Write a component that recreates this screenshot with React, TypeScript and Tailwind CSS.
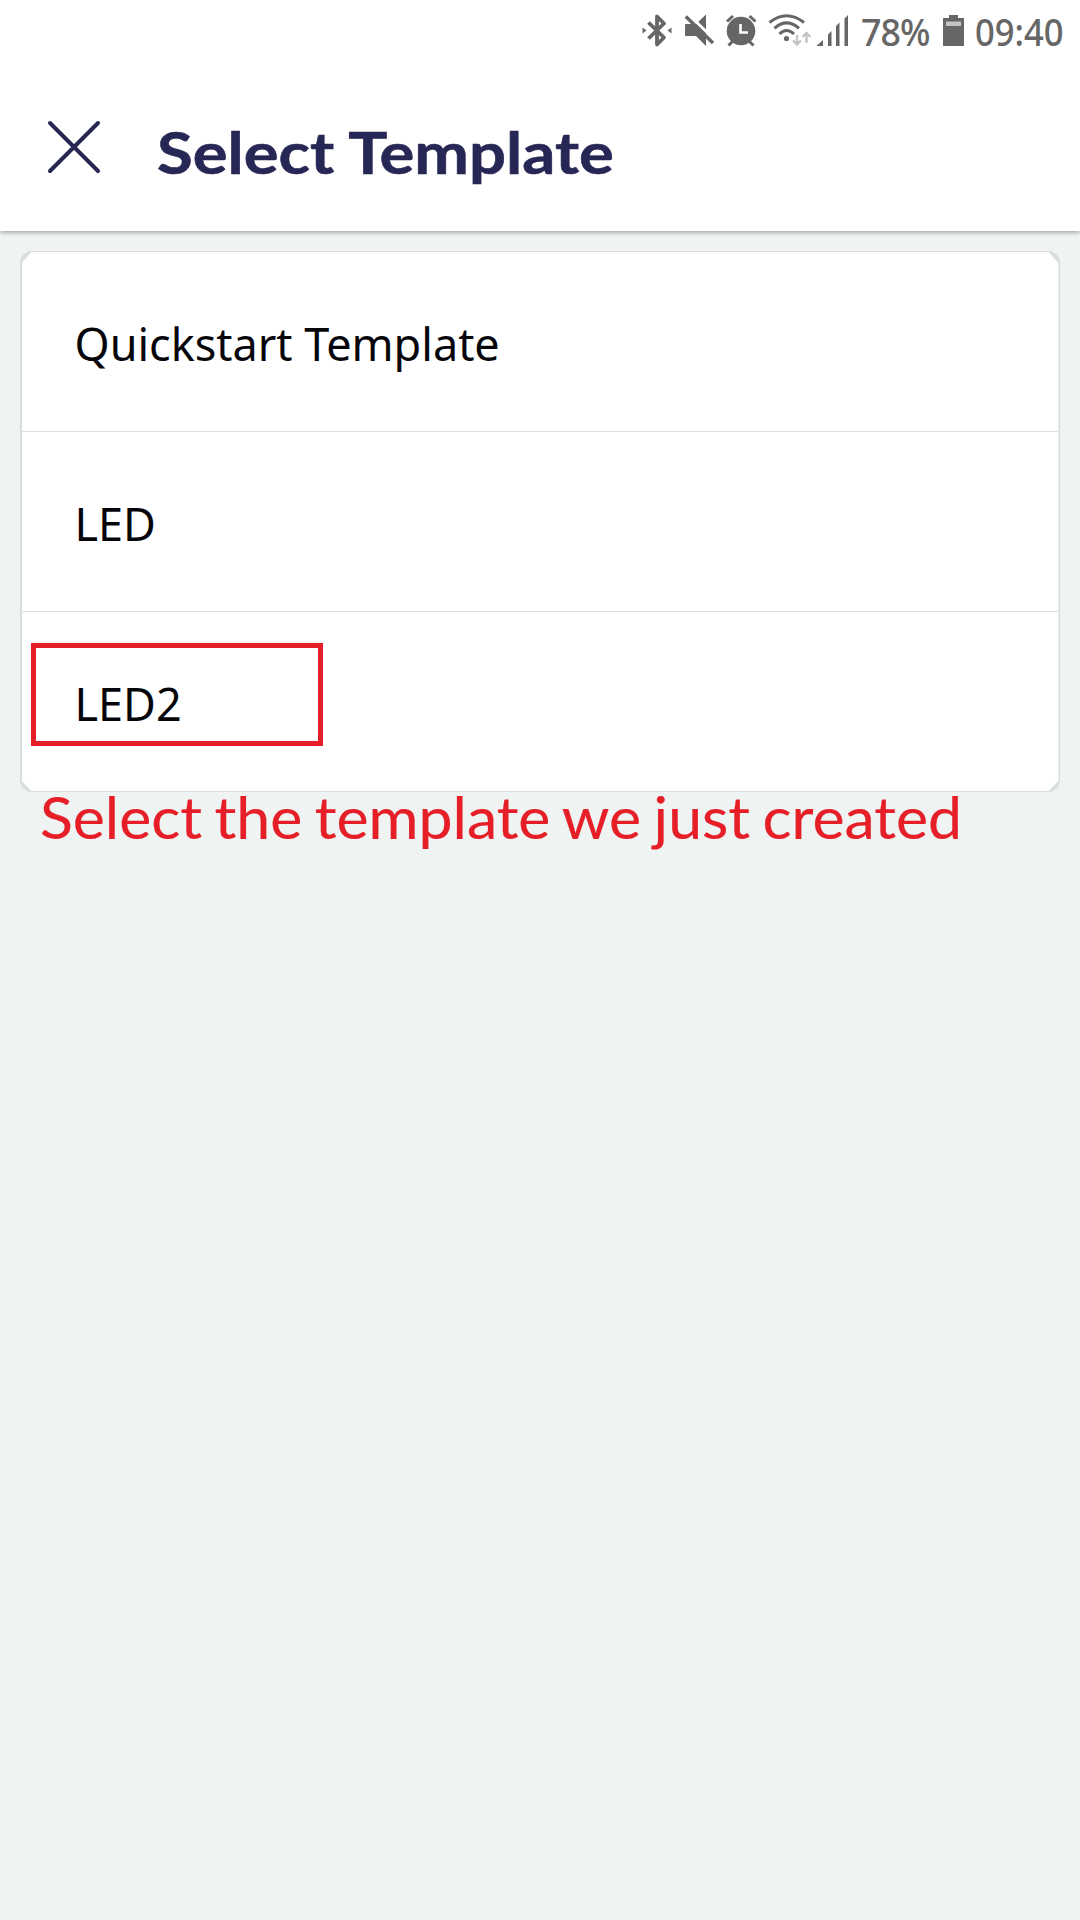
const ink = '#666666';

function StatusBar() {
  return (
    <div className="flex h-16 items-start pl-[640px] text-[#666666]">
      <svg className="h-16 w-[220px] shrink-0" viewBox="640 0 220 64" fill="none">
        {/* bluetooth */}
        <path d="M648.5 22.5 664 37.5 657 44.500V16.500L664 23.500 648.500 38.500" stroke={ink} strokeWidth="3.8" strokeLinejoin="round" />
        <path d="M642.500 27.500v6l4-3zM671.500 27.500v6l-4-3z" fill={ink} />
        {/* muted speaker */}
        <path d="M686 24h10l10-9.500V46L696 36h-10q-1 0-1-1V25q0-1 1-1z" fill={ink} />
        <path d="M687.500 13.500 716 41" stroke="#fff" strokeWidth="3" />
        <path d="M685.800 16.500 713 43" stroke={ink} strokeWidth="3.400" />
        {/* alarm */}
        <circle cx="741" cy="31" r="14.300" fill={ink} />
        <path d="M727 21.500l6-5.500M755.500 21.500l-6-5.500M728.500 45.500l4-4M753.500 45.500l-4-4" stroke={ink} strokeWidth="3" />
        <path d="M740.500 24v8.500h7.500" stroke="#fff" strokeWidth="2.600" />
        {/* wifi */}
        <path d="M769.500 22.500Q786.500 9 804 22.500M774.500 28.300Q786.500 17.500 799 28.300M779.500 34Q786.500 27 794 34" stroke={ink} strokeWidth="3" />
        <circle cx="786.500" cy="38.500" r="2.600" fill={ink} />
        <path d="M797 35v9M793 40.500l4 4 4-4M806.500 43v-9M802.500 37l4-4 4 4" stroke="#c4c4c4" strokeWidth="2.400" />
        {/* signal */}
        <path d="M816.500 46l6.500-6v6zM828 34.500l3.500-3.500v15H828zM836 26l3.500-3.500V46H836zM844.500 18.500l3.500-3.500v31h-3.500z" fill={ink} />
      </svg>
      <span className="ml-px w-[82px] shrink-0 origin-left scale-x-[0.94] font-['Noto_Sans'] text-[38px] leading-[62px] font-medium whitespace-nowrap tracking-[-1px]">78%</span>
      <svg className="h-16 w-[22px] shrink-0" viewBox="943 0 22 64">
        <path d="M949 15h9v3h6v28h-21V18h6z" fill={ink} />
        <path d="M946 21.500h15V26h-15z" fill="#c4c4c4" />
      </svg>
      <span className="ml-[10px] shrink-0 origin-left scale-x-[0.91] font-['Noto_Sans'] text-[38px] leading-[62px] font-medium whitespace-nowrap">09:40</span>
    </div>
  );
}

function Header() {
  return (
    <header className="relative z-10 h-[231px] bg-white shadow-[0_1px_5px_rgba(0,0,0,0.4)]">
      <StatusBar />
      <div className="flex h-[167px] items-start pl-[46px]">
        <svg className="mt-[55px] h-[56px] w-[56px] shrink-0" viewBox="0 0 56 56">
          <path d="M4 4 52 52M52 4 4 52" stroke="#272755" strokeWidth="4" strokeLinecap="round" />
        </svg>
        <h1 className="ml-[55px] mt-[48px] origin-left scale-x-[1.125] font-['Lato'] text-[58px] leading-[80px] font-bold whitespace-nowrap text-[#272755] [-webkit-text-stroke:0.6px_#272755]">Select Template</h1>
      </div>
    </header>
  );
}

const templates = ['Quickstart Template', 'LED', 'LED2'];

export default function App() {
  return (
    <div className="min-h-[1920px] w-[1080px] overflow-hidden bg-[#eff3f2]">
      <Header />
      <main className="px-5 pt-5">
        <div className="relative h-[541px] w-[1040px] rounded-[12px] bg-[#dadddd] px-[1.5px] py-px">
          <ul className="h-[539px] bg-white [clip-path:polygon(10px_0,calc(100%-10px)_0,100%_11px,100%_calc(100%-10px),calc(100%-10px)_100%,10px_100%,0_calc(100%-10px),0_11px)]">
            {templates.map((name) => (
              <li key={name} className="flex h-[180px] items-center border-b border-[#dfdfdf] pl-[53px] font-['Noto_Sans'] text-[45px] leading-[60px] text-[#06060a] last:h-[179px] last:border-0">
                <span className="mt-[4px] whitespace-nowrap">{name}</span>
              </li>
            ))}
          </ul>
          <div className="absolute top-[392px] left-[11px] h-[103px] w-[292px] border-[5px] border-[#e61e27]" />
        </div>
        <p className="ml-[20px] mt-[-9px] font-['Lato'] text-[59px] leading-[68px] whitespace-nowrap text-[#e51e27]">
          <span className="inline-block origin-left scale-x-[1.03] [word-spacing:-3px] [-webkit-text-stroke:0.2px_#e51e27]">Select the template we just created</span>
        </p>
      </main>
    </div>
  );
}
